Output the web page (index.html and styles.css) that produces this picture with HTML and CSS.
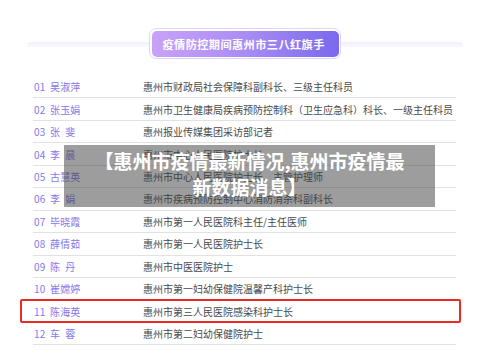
FILE: index.html
```html
<!DOCTYPE html>
<html lang="zh">
<head>
<meta charset="utf-8">
<link rel="stylesheet" href="styles.css">
</head>
<body>
<div class="page">
  <div class="head">
    <div class="band"></div>
    <div class="badge"><div class="badge-in">疫情防控期间惠州市三八红旗手</div></div>
  </div>
  <ul class="list">
    <li class="row"><span class="who">01 吴淑萍</span><span class="job">惠州市财政局社会保障科副科长、三级主任科员</span></li>
    <li class="row"><span class="who">02 张玉娟</span><span class="job">惠州市卫生健康局疾病预防控制科（卫生应急科）科长、一级主任科员</span></li>
    <li class="row"><span class="who">03 张&ensp;斐</span><span class="job">惠州报业传媒集团采访部记者</span></li>
    <li class="row"><span class="who">04 李&ensp;晨</span><span class="job">惠州市中心人民医院护士长</span></li>
    <li class="row"><span class="who">05 古慧英</span><span class="job">惠州市中心人民医院护士长、主管护理师</span></li>
    <li class="row"><span class="who">06 李&ensp;娟</span><span class="job">惠州市疾病预防控制中心消防消杀科副科长</span></li>
    <li class="row"><span class="who">07 毕晓霞</span><span class="job">惠州市第一人民医院科主任/主任医师</span></li>
    <li class="row"><span class="who">08 薛倩茹</span><span class="job">惠州市第一人民医院护士长</span></li>
    <li class="row"><span class="who">09 陈&ensp;丹</span><span class="job">惠州市中医医院护士</span></li>
    <li class="row"><span class="who">10 崔嫦婷</span><span class="job">惠州市第一妇幼保健院温馨产科护士长</span></li>
    <li class="row hl"><span class="who">11 陈海英</span><span class="job">惠州市第三人民医院感染科护士长</span></li>
    <li class="row"><span class="who">12 车&ensp;蓉</span><span class="job">惠州市第二妇幼保健院护士</span></li>
  </ul>
  <div class="overlay">【惠州市疫情最新情况,惠州市疫情最<br>新数据消息】</div>
</div>
</body>
</html>
```

FILE: styles.css
```css
html, body {
  margin: 0;
  padding: 0;
  background: #ffffff;
}
.page {
  position: relative;
  width: 500px;
  height: 353px;
  overflow: hidden;
  font-family: "Noto Sans CJK SC", "Noto Sans", sans-serif;
}
.head {
  position: relative;
  height: 76px;
  padding-top: 28px;
  box-sizing: border-box;
}
.band {
  position: absolute;
  left: 27px;
  top: 41.5px;
  width: 436px;
  height: 5px;
  border-radius: 4px 4px 0 0;
  background: linear-gradient(#f0edfd, #fbfaff);
}
.badge {
  position: relative;
  margin-left: 149px;
  width: 192px;
  height: 31px;
  box-sizing: border-box;
  border: 1px solid #ddd5fb;
  border-radius: 7px;
  padding: 1.5px;
  background: #fff;
}
.badge-in {
  height: 100%;
  border-radius: 5px;
  background: linear-gradient(90deg, #c9a2f8 0%, #a98cf4 50%, #7a69ee 100%);
  color: #fff;
  font-weight: 700;
  font-size: 11.2px;
  letter-spacing: 0.4px;
  line-height: 26px;
  padding-left: 11px;
  box-sizing: border-box;
  white-space: nowrap;
}
.list {
  list-style: none;
  margin: 0 0 0 33px;
  padding: 0;
  width: 423px;
}
.row {
  position: relative;
  display: flex;
  align-items: center;
  height: 22.45px;
  box-sizing: border-box;
  border-bottom: 1px solid #e2e2e2;
  font-size: 10px;
  white-space: nowrap;
}
.who {
  width: 110px;
  padding-left: 1px;
  box-sizing: border-box;
  color: #8478ea;
  word-spacing: 2px;
  letter-spacing: 0.2px;
}
.job {
  color: #4a4a4a;
}
.hl::after {
  content: "";
  position: absolute;
  left: -13px;
  right: -5px;
  top: -1.5px;
  bottom: -1.5px;
  border: 2px solid #ea2b22;
  border-radius: 2px;
}
.overlay {
  position: absolute;
  left: 64px;
  top: 145px;
  width: 371px;
  height: 62px;
  box-sizing: border-box;
  padding-top: 3px;
  background: rgba(60, 60, 60, 0.5);
  color: #fff;
  font-weight: 700;
  font-size: 19px;
  line-height: 26px;
  text-align: center;
  white-space: nowrap;
}
```
